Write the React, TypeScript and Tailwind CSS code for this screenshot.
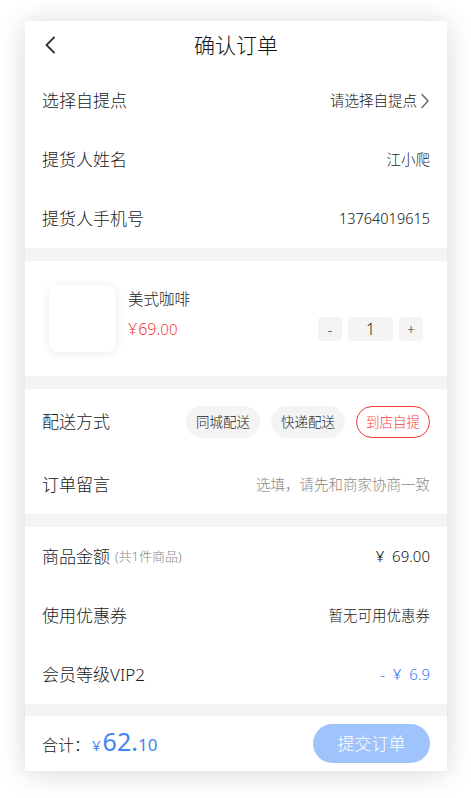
import React from "react";

const font = { fontFamily: '"Noto Sans", "Noto Sans CJK SC", sans-serif' };

const Gap = ({ h = "h-[13px]" }: { h?: string }) => <div className={`${h} bg-[#f4f4f4]`} />;

const Row = ({ label, children, extra }: { label: string; children?: React.ReactNode; extra?: React.ReactNode }) => (
  <div className="flex h-[59px] items-center justify-between px-[17px]">
    <div className="flex items-center text-[17px] text-[#1a1a1a]">
      {label}
      {extra}
    </div>
    {children}
  </div>
);

export default function App() {
  return (
    <div className="min-h-[798px] bg-white pt-[21px] font-light" style={font}>
      <div className="ml-[25px] w-[422px] bg-white shadow-[0_2px_26px_rgba(0,0,0,0.16)]">
        {/* header */}
        <div className="relative flex h-[50px] items-center justify-center">
          <svg className="absolute left-[18px] top-[15px]" width="14" height="18" viewBox="0 0 14 18" fill="none">
            <polyline points="11,1.5 3.5,9 11,16.5" stroke="#333" strokeWidth="1.8" strokeLinecap="round" strokeLinejoin="round" />
          </svg>
          <span className="text-[21px] text-[#111]">确认订单</span>
        </div>

        <Row label="选择自提点">
          <div className="flex items-center text-[14.5px] text-[#222]">
            请选择自提点
            <svg className="ml-[3px]" width="10" height="16" viewBox="0 0 10 16" fill="none">
              <polyline points="2,1.5 8,8 2,14.5" stroke="#666" strokeWidth="1.4" strokeLinecap="round" strokeLinejoin="round" />
            </svg>
          </div>
        </Row>
        <Row label="提货人姓名">
          <span className="text-[14.5px] text-[#222]">江小爬</span>
        </Row>
        <Row label="提货人手机号">
          <span className="text-[14.5px] text-[#111]">13764019615</span>
        </Row>

        <Gap />

        {/* product */}
        <div className="flex h-[115px] items-center pl-[24px] pr-[24px]">
          <div className="h-[67px] w-[67px] rounded-[8px] bg-white shadow-[0_1px_8px_rgba(0,0,0,0.09)]" />
          <div className="ml-[12px] flex h-[67px] flex-1 flex-col pt-[3px]">
            <span className="text-[15.5px] leading-[22px] text-[#1a1a1a]">美式咖啡</span>
            <div className="mt-[7px] flex items-center justify-between">
              <span className="text-[16px] leading-[22px] text-[#f53a3a]">
                ¥<span className="ml-[1px]">69.</span><span className="text-[15px]">00</span>
              </span>
              <div className="flex items-center gap-[6px]">
                <div className="flex h-[24px] w-[24px] items-center justify-center rounded-[4px] bg-[#f4f4f4] text-[14px] text-[#333]">-</div>
                <div className="flex h-[24px] w-[45px] items-center justify-center rounded-[4px] bg-[#f4f4f4] text-[16px] text-[#222]">1</div>
                <div className="flex h-[24px] w-[24px] items-center justify-center rounded-[4px] bg-[#f4f4f4] text-[14px] text-[#333]">+</div>
              </div>
            </div>
          </div>
        </div>

        <Gap />

        {/* delivery */}
        <div className="flex h-[66px] items-center justify-between px-[17px]">
          <span className="text-[17px] text-[#1a1a1a]">配送方式</span>
          <div className="flex items-center gap-[11px]">
            <div className="flex h-[32px] w-[74px] items-center justify-center rounded-full bg-[#f4f4f4] text-[13.5px] text-[#1a1a1a]">同城配送</div>
            <div className="flex h-[32px] w-[74px] items-center justify-center rounded-full bg-[#f4f4f4] text-[13.5px] text-[#1a1a1a]">快递配送</div>
            <div className="flex h-[32px] w-[74px] items-center justify-center rounded-full border border-[#f53a3a] text-[13.5px] text-[#f53a3a]">到店自提</div>
          </div>
        </div>
        <Row label="订单留言">
          <span className="text-[14.5px] text-[#888]">选填，请先和商家协商一致</span>
        </Row>

        <Gap />

        <Row label="商品金额" extra={<span className="ml-[5px] text-[13px] text-[#888]">(共1件商品)</span>}>
          <span className="text-[15px] text-[#111]">¥&nbsp;&nbsp;69.00</span>
        </Row>
        <Row label="使用优惠券">
          <span className="text-[14.5px] text-[#222]">暂无可用优惠券</span>
        </Row>
        <Row label="会员等级VIP2">
          <span className="text-[15px] text-[#2f7df4]">-&nbsp;&nbsp;¥&nbsp;&nbsp;6.9</span>
        </Row>

        <Gap h="h-[12px]" />

        {/* footer */}
        <div className="flex h-[55px] items-center justify-between px-[17px]">
          <div className="flex items-baseline font-normal text-[#3f86f4]">
            <span className="text-[16px] font-light text-[#111]">合计：</span>
            <span className="ml-[2px] text-[15px]">¥</span>
            <span className="ml-[2px] text-[25px] leading-none">62.</span>
            <span className="text-[17px]">10</span>
          </div>
          <button className="h-[39px] w-[117px] rounded-full bg-[#9fc3fb] text-[17px] text-white">提交订单</button>
        </div>
      </div>
    </div>
  );
}
